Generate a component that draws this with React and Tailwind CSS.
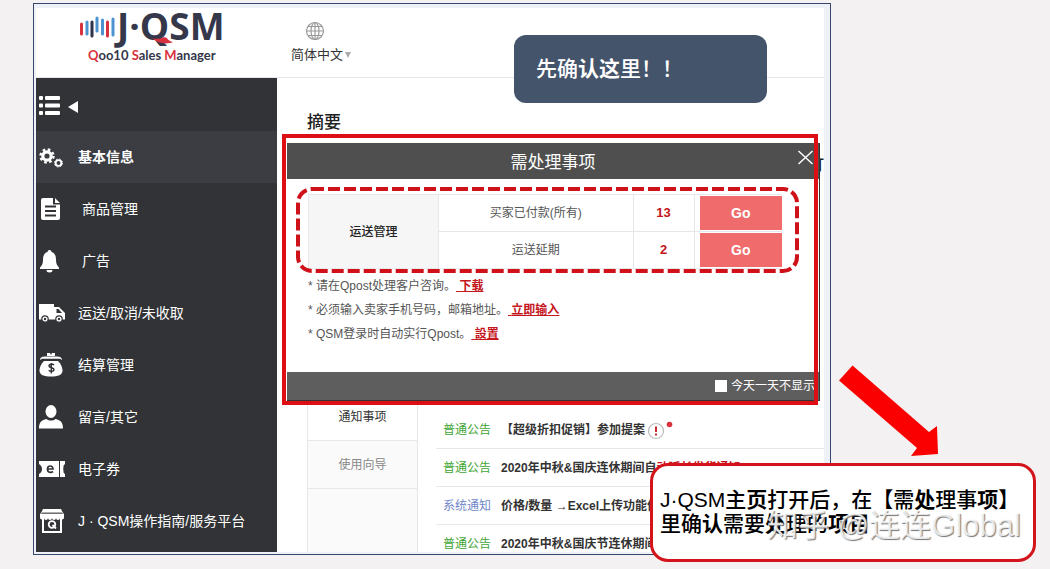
import React, { useState } from 'react';

const menuItems = [
  { icon: 'gears', label: '基本信息', active: true },
  { icon: 'doc', label: '商品管理', indent: true },
  { icon: 'bell', label: '广告', indent: true },
  { icon: 'truck', label: '运送/取消/未收取' },
  { icon: 'purse', label: '结算管理' },
  { icon: 'user', label: '留言/其它' },
  { icon: 'ticket', label: '电子券' },
  { icon: 'shop', label: 'J · QSM操作指南/服务平台' }
];

const tasks = [
  { name: '买家已付款(所有)', count: 13 },
  { name: '运送延期', count: 2 }
];

const tips = [
  { text: '* 请在Qpost处理客户咨询。', link: '下载' },
  { text: '* 必须输入卖家手机号码，邮箱地址。', link: '立即输入' },
  { text: '* QSM登录时自动实行Qpost。', link: '設置' }
];

const notices = [
  { type: '普通公告', title: '【超级折扣促销】参加提案', alert: true },
  { type: '普通公告', title: '2020年中秋&国庆连休期间自', extra: '动延长发货通知' },
  { type: '系统通知', title: '价格/数量 →Excel上传功能优化', system: true },
  { type: '普通公告', title: '2020年中秋&国庆节连休期间客服' }
];

const MenuIcon = ({ name }) => (
  <svg viewBox="0 0 28 26" className="w-7 h-[26px] shrink-0" fill="#fff" aria-hidden="true">
    {name === 'gears' && (
      <>
        <circle cx="9" cy="12" r="4.200" fill="none" stroke="#fff" strokeWidth="3.200" />
        <circle cx="9" cy="12" r="6.500" fill="none" stroke="#fff" strokeWidth="2.400" strokeDasharray="2.600 2.500" />
        <circle cx="20.500" cy="19" r="2.900" fill="none" stroke="#fff" strokeWidth="1.900" />
        <circle cx="20.500" cy="19" r="4" fill="none" stroke="#fff" strokeWidth="1" strokeDasharray="1.570 1.570" />
      </>
    )}
    {name === 'doc' && (
      <>
        <path d="M5 2h10v6.500h7V22a2 2 0 0 1-2 2H5a2 2 0 0 1-2-2V4a2 2 0 0 1 2-2zM17 2l5 5h-5z" />
        <path stroke="#313336" strokeWidth="2" d="M7 10.500h11M7 15h11M7 19.500h11" />
      </>
    )}
    {name === 'bell' && (
      <path d="M11.500 2a2 2 0 0 1 2 2c3.500 1 4.500 4 4.500 8 0 4 1.500 6 3 7.500V21H2v-1.500C3.500 18 5 16 5 12c0-4 1-7 4.500-8a2 2 0 0 1 2-2zM8.500 22h6a3 2.500 0 0 1-6 0z" />
    )}
    {name === 'truck' && (
      <>
        <path d="M1 4h15v3h5l6 6v6.500H1z" />
        <path d="M18.500 9h2l3.500 4h-5.500z" fill="#313336" />
        <circle cx="7" cy="19" r="3.200" stroke="#313336" strokeWidth="1.200" />
        <circle cx="21" cy="19" r="3.200" stroke="#313336" strokeWidth="1.200" />
        <circle cx="7" cy="19" r="1.200" fill="#313336" />
        <circle cx="21" cy="19" r="1.200" fill="#313336" />
      </>
    )}
    {name === 'purse' && (
      <>
        <path d="M9 1h3l1 2 1-2h3v3H9z" />
        <path d="M2 8c0-3 3-3.500 5-3.500h12c2 0 5 .5 5 3.500l-2-1.200H4z" />
        <path d="M6 9h14c3 3 4.500 6.500 4.500 9.500C24.500 23 20 24.500 13 24.500S1.500 23 1.500 18.500C1.500 15.500 3 12 6 9z" />
        <path d="M16 13c-2-1.500-5-1-5 1s5 1.500 5 3.500-3.500 2.500-5.300.8M13.300 11v10.500" fill="none" stroke="#313336" strokeWidth="1.500" />
      </>
    )}
    {name === 'user' && (
      <>
        <ellipse cx="13" cy="7.500" rx="5.500" ry="6.500" />
        <path d="M1 24.500c0-6 2-8 7.500-9.500 2.500 2 6.500 2 9 0C23 16.500 25 18.500 25 24.500z" />
      </>
    )}
    {name === 'ticket' && (
      <>
        <path d="M1 5h26v3l-1.500 1.500v7L27 18v3H1v-3c4-2 4-8 0-10z" />
        <path d="M27 9.500c-2 2-2 5 0 7z" fill="#313336" />
        <path d="M21.500 5v16" stroke="#313336" strokeWidth="1" />
        <path d="M9.500 13h5.500c0-4-5.500-4-5.500.2 0 3.500 3.500 3.800 5.500 2.300" fill="none" stroke="#313336" strokeWidth="1.700" />
      </>
    )}
    {name === 'shop' && (
      <>
        <path d="M5 1h18l2 4H3zM2 5.500h24V9a2 2 0 0 1-4 1 2 2 0 0 1-4 0 2 2 0 0 1-4 0 2 2 0 0 1-4 0 2 2 0 0 1-4 0 2 2 0 0 1-4-1z" />
        <path d="M5 9v15h18V9" fill="none" stroke="#fff" strokeWidth="2" />
        <path d="M4 5h20" stroke="#313336" strokeWidth=".8" />
        <circle cx="14" cy="16.500" r="3.300" fill="none" stroke="#fff" strokeWidth="1.800" />
        <path d="M14.500 17l3.500 3.500" stroke="#fff" strokeWidth="1.800" />
      </>
    )}
  </svg>
);

const Logo = () => (
  <div className="w-[150px] pl-[1px]">
    <div className="flex items-start h-9 relative">
      <svg viewBox="0 0 38 26" className="w-[38px] h-[26px] mt-1 shrink-0" aria-hidden="true">
        <g strokeWidth="3" strokeLinecap="round">
          <path stroke="#d8323f" d="M2.500 10v10M28.500 8v14" />
          <path stroke="#4c93cf" d="M8 8v12M18 4v13M23.500 6v14M34 5v16" />
          <path stroke="#2d3348" d="M13 8v14" />
        </g>
      </svg>
      <span className="font-['Open_Sans'] font-bold text-[37px] leading-8 text-[#35374a]">J·QSM</span>
      <svg viewBox="0 0 22 7" className="absolute left-[73px] top-[27px] w-[22px] h-[7px]" aria-hidden="true">
        <path fill="#d8323f" d="M0 1c4 1.500 8 1 12-1l3 1c1 2 3 3.500 6 4C14 8 5 6 0 1z" />
      </svg>
    </div>
    <p className="pl-[9px] pt-[1px] font-[Lato] font-bold text-[13px] leading-4 text-[#35374a]">
      <span className="text-[#d8323f]">Q</span>oo10 <span className="text-[#d8323f]">S</span>ales{' '}
      <span className="text-[#d8323f]">M</span>anager
    </p>
  </div>
);

const Header = () => (
  <header className="flex h-[70px] border-b border-gray-200 pl-[42px] pt-[2px]">
    <Logo />
    <button type="button" className="flex flex-col items-center ml-[63px] mt-[11px] h-12 text-[13px] text-[#333]">
      <svg viewBox="0 0 20 20" className="w-5 h-5 mr-3" fill="none" stroke="#999" strokeWidth="1.200" aria-hidden="true">
        <circle cx="10" cy="10" r="8.500" />
        <ellipse cx="10" cy="10" rx="4" ry="8.500" />
        <path d="M10 1.500v17M1.500 10h17M3 5.500h14M3 14.500h14" />
      </svg>
      <span className="flex items-center mt-1 leading-5">
        简体中文
        <svg viewBox="0 0 6 6" className="w-[6px] h-[6px] ml-[2px]" aria-hidden="true">
          <path fill="#aaa" d="M0 0h6L3 6z" />
        </svg>
      </span>
    </button>
  </header>
);

const Sidebar = () => (
  <nav className="w-[241px] shrink-0 bg-[#313336] text-white pb-[5px]">
    <button type="button" aria-label="menu" className="flex items-center h-[53px] pl-[3px] pt-[3px]">
      <svg viewBox="0 0 40 20" className="w-10 h-5" fill="#fff" aria-hidden="true">
        <rect x="0" y="0" width="4" height="4" rx="1" />
        <rect x="6" y="0" width="15" height="4" rx="1" />
        <rect x="0" y="7.500" width="4" height="4" rx="1" />
        <rect x="6" y="7.500" width="15" height="4" rx="1" />
        <rect x="0" y="15" width="4" height="4" rx="1" />
        <rect x="6" y="15" width="15" height="4" rx="1" />
        <path d="M39 5v12L29 11z" />
      </svg>
    </button>
    <ul>
      {menuItems.map((item) => (
        <li key={item.label} className={item.active ? 'bg-[#3b3d43] font-bold' : ''}>
          <a href="#" className="flex items-center h-[52px] pl-[2px] text-sm">
            <MenuIcon name={item.icon} />
            <span className={item.indent ? 'pl-4' : 'pl-3'}>{item.label}</span>
          </a>
        </li>
      ))}
    </ul>
  </nav>
);

const TaskDialog = ({ onClose }) => (
  <div className="absolute left-[5px] right-[6px] top-14 pt-[9px] pl-[5px] pb-1">
    <section className="-mr-[2px] bg-white border-r border-b border-[#333]">
      <div className="relative flex items-center justify-center h-9 pt-[3px] bg-[#4f4f4f] text-white">
        <h2 className="text-[17px]">需处理事项</h2>
        <button type="button" aria-label="close" onClick={onClose} className="absolute right-1 top-1">
          <svg viewBox="0 0 20 20" className="w-5 h-5" stroke="#fff" strokeWidth="1.500" aria-hidden="true">
            <path d="M3.500 4l14 13M17.500 4l-14 13" />
          </svg>
        </button>
      </div>
      <div className="pt-[15px] pl-[21px] pr-[37px]">
        <table className="w-full text-xs text-center border-collapse">
          <tbody>
            {tasks.map((task, i) => (
              <tr key={task.name} className="h-[37px] border-y border-gray-200">
                {i === 0 && (
                  <th rowSpan="2" className="w-[130px] bg-[#f6f6f7] border-x border-gray-200 font-medium text-[#222]">
                    运送管理
                  </th>
                )}
                <td className="text-[#555]">{task.name}</td>
                <td className="w-[61px] border-x border-gray-200 font-bold text-[13px] text-[#c4161c]">{task.count}</td>
                <td className="w-[88px] pl-[5px]">
                  <button type="button" className="block w-full h-[34px] bg-[#f06b6b] text-white text-sm font-bold">
                    Go
                  </button>
                </td>
              </tr>
            ))}
          </tbody>
        </table>
        <ul className="pt-[5px] pb-[26px] text-xs leading-6 text-[#555]">
          {tips.map((tip) => (
            <li key={tip.link}>
              {tip.text}
              <a href="#" className="font-bold text-[#c4161c] underline whitespace-pre"> {tip.link}</a>
            </li>
          ))}
        </ul>
      </div>
      <div className="flex items-center justify-end h-7 bg-[#5e5e5e] pr-[4px]">
        <label className="flex items-center gap-1 text-xs text-white">
          <input type="checkbox" className="appearance-none w-3 h-3 bg-white" />
          今天一天不显示
        </label>
      </div>
    </section>
    {/* red marker frame */}
    <div className="absolute inset-0 border-4 border-[#dd0f14] pointer-events-none" />
    <svg className="absolute left-[16px] top-[55px] w-[499px] h-[82px] overflow-visible pointer-events-none" aria-hidden="true">
      <rect width="499" height="82" rx="14" fill="none" stroke="#cf1119" strokeWidth="4" strokeDasharray="12 4" />
    </svg>
  </div>
);

const NoticeRow = ({ notice }) => (
  <li className="flex items-center h-[38px] gap-[10px] pl-[7px] border-b border-gray-200 whitespace-nowrap overflow-hidden last:h-[27px] last:items-end last:border-0">
    <span className={notice.system ? 'text-[#6f86c9]' : 'text-[#3fa535]'}>{notice.type}</span>
    <a href="#" className="font-semibold text-[#333]">
      {notice.title}
      {notice.extra && <span className="text-[#c4161c]">{notice.extra}</span>}
    </a>
    {notice.alert && (
      <svg viewBox="0 0 26 20" className="w-[26px] h-5 -ml-2" aria-hidden="true">
        <circle cx="9" cy="11" r="7.500" fill="none" stroke="#bbb" strokeWidth="1.200" />
        <path d="M9 6.500v5.500M9 13.500v2" stroke="#c4161c" strokeWidth="1.800" />
        <circle cx="22.500" cy="4.500" r="2.800" fill="#d8323f" />
      </svg>
    )}
  </li>
);

const App = () => {
  const [open, setOpen] = useState(true);

  return (
    <div className="relative min-h-screen bg-[#f3f1f2] pt-[3px] pl-[33px] pr-[219px] font-['Liberation_Sans','Noto_Sans_CJK_SC',sans-serif]">
      <div className="relative bg-[#eff1f8] border border-[#35476f] pt-1 pl-[2px] pr-[6px] pb-[2px]">
        <div className="bg-white">
          <Header />
          <div className="flex">
            <Sidebar />
            <main className="relative flex flex-col grow min-w-0 pl-[30px]">
              <h1 className="pt-[35px] text-[17px] leading-5 font-medium text-[#222]">摘要</h1>
              <p className="pt-6 text-right text-[15px] leading-4 font-medium text-[#222]">订</p>
              <section className="flex mt-auto text-xs leading-4">
                <div className="flex flex-col w-[111px] shrink-0 border-x border-gray-200 bg-[#fafafa]">
                  <button type="button" className="h-12 bg-white border-b border-gray-200 text-[#333]">通知事项</button>
                  <button type="button" className="h-12 border-b border-gray-200 text-[#888]">使用向导</button>
                </div>
                <ul className="grow min-w-0 pt-[18px] ml-[18px]">
                  {notices.map((notice) => (
                    <NoticeRow key={notice.title} notice={notice} />
                  ))}
                </ul>
              </section>
              {open && <TaskDialog onClose={() => setOpen(false)} />}
            </main>
          </div>
        </div>
        <div className="absolute left-[480px] top-[31px] flex items-center w-[253px] h-[68px] pl-[22px] rounded-xl bg-[#44546a] text-white text-[21px] font-medium">
          <p>先确<b>认这</b>里！！</p>
        </div>
      </div>

      <svg viewBox="0 0 100 92" className="absolute left-[839px] top-[365px] w-[100px] h-[92px]" aria-hidden="true">
        <path fill="#fa0000" d="M13.500 .5L90 67l8-6 1 28-27 2 6-8L0 15.500z" />
      </svg>
      <div className="absolute left-[650px] top-[463px] w-[386px] h-[99px] rounded-[18px] border-[3px] border-[#d4141b] bg-white pt-[22px] pl-[7px] text-[21px] leading-6 font-medium text-black whitespace-nowrap">
        <p>J·QSM主<b>页</b>打开后，在【需<b>处</b>理事<b>项</b>】</p>
        <p>里确<b>认</b>需要<b>处</b>理的<b>项目</b></p>
        <p className="absolute left-[114px] top-[42px] text-[31px] leading-9 font-normal text-white/80 text-shadow-[1px_1px_1px_#777]">
          知乎 @连连Global
        </p>
      </div>
    </div>
  );
};

export default App;
